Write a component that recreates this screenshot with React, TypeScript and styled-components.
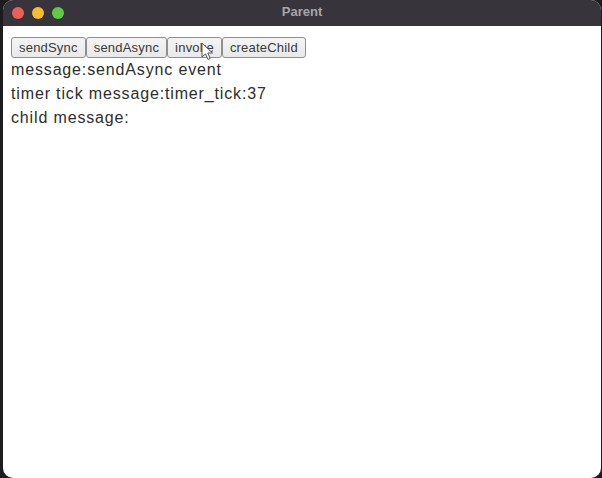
import React from "react";
import styled, { createGlobalStyle } from "styled-components";

const Global = createGlobalStyle`
  html, body { margin: 0; padding: 0; background: #1c1c1e; }
  body { width: 602px; height: 478px; overflow: hidden; }
  #root { height: 478px; }
`;

const Desktop = styled.div`
  height: 478px;
  padding-left: 3px;
  background: #1c1c1e;
`;

const Window = styled.div`
  width: 598px;
  height: 478px;
  background: #ffffff;
  border-radius: 10px;
  overflow: hidden;
  display: flex;
  flex-direction: column;
  position: relative;
`;

const TitleBar = styled.div`
  height: 26px;
  flex: 0 0 26px;
  background: #37343c;
  display: flex;
  align-items: center;
  position: relative;
  padding-left: 9px;
  gap: 8px;
`;

const Light = styled.span<{ $c: string }>`
  width: 12px;
  height: 12px;
  border-radius: 50%;
  background: ${(p) => p.$c};
`;

const Title = styled.div`
  position: absolute;
  left: 0;
  right: 0;
  top: 0;
  line-height: 24px;
  text-align: center;
  font-family: "Liberation Sans", Arial, sans-serif;
  font-weight: bold;
  font-size: 13px;
  color: #a7a4ab;
  pointer-events: none;
`;

const Content = styled.div`
  padding: 11px 8px 0 8px;
  font-family: "Liberation Sans", Arial, sans-serif;
  color: #222;
`;

const Toolbar = styled.div`
  display: flex;
  gap: 0;
  position: relative;
`;

const Button = styled.button`
  height: 21px;
  padding: 0 7px;
  margin: 0;
  border: 1px solid #8f8f8f;
  border-radius: 3px;
  background: linear-gradient(#f4f4f4, #e9e9e9);
  font-family: "Liberation Sans", Arial, sans-serif;
  font-size: 13px;
  letter-spacing: 0.2px;
  color: #3a3a3a;
  cursor: default;
`;

const Line = styled.div`
  font-size: 16px;
  line-height: 24px;
  letter-spacing: 0.85px;
  color: #2e2e2e;
`;

const Cursor = styled.svg`
  position: absolute;
  left: 190px;
  top: 5px;
  width: 14px;
  height: 20px;
  pointer-events: none;
`;

export default function App() {
  return (
    <>
      <Global />
      <Desktop>
        <Window>
          <TitleBar>
            <Light $c="#ec5f57" />
            <Light $c="#f5be31" />
            <Light $c="#5ecb45" />
            <Title>Parent</Title>
          </TitleBar>
          <Content>
            <Toolbar>
              <Button>sendSync</Button>
              <Button>sendAsync</Button>
              <Button>invoke</Button>
              <Button>createChild</Button>
              <Cursor viewBox="0 0 14 20">
                <path
                  d="M1 1 L1 15 L4.5 11.8 L7 17.5 L9.2 16.5 L6.8 11 L11.5 11 Z"
                  fill="#ffffff"
                  stroke="#555"
                  strokeWidth="1"
                  strokeLinejoin="round"
                />
              </Cursor>
            </Toolbar>
            <Line>message:sendAsync event</Line>
            <Line>timer tick message:timer_tick:37</Line>
            <Line>child message:</Line>
          </Content>
        </Window>
      </Desktop>
    </>
  );
}
